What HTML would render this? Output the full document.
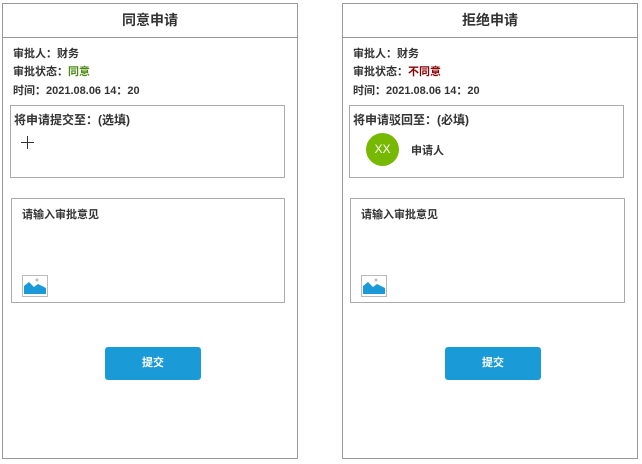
<!DOCTYPE html>
<html><head><meta charset="utf-8"><style>
*{margin:0;padding:0;box-sizing:border-box}
body{width:642px;height:464px;background:#fff;font-family:"Liberation Sans","Noto Sans CJK SC",sans-serif;color:#333;position:relative;overflow:hidden}
.p{position:absolute;top:3px;width:296px;height:456px;border:1px solid #999}
.h{height:34px;border-bottom:1px solid #999;text-align:center;line-height:32px;font-size:14px;font-weight:bold;color:#333}
.t{position:absolute;left:10px;font-size:11px;font-weight:bold;color:#333}
.b{position:absolute;border:1px solid #aaa}
.bt{position:absolute;left:102px;top:343px;width:96px;height:33px;background:#1a9bd7;border-radius:3px;color:#fff;font-size:11px;font-weight:bold;text-align:center;line-height:33px}
.ic{position:absolute;left:10px;top:76px;width:26px;height:22px;border:1px solid #bbb;background:#fff}
</style></head><body>
<div class="p" style="left:2px">
<div class="h">同意申请</div>
<div class="t" style="top:41px">审批人：财务</div>
<div class="t" style="top:59px">审批状态：<span style="color:#4e8a12">同意</span></div>
<div class="t" style="top:78px">时间：2021.08.06 14：20</div>
<div class="b" style="left:7px;top:101px;width:275px;height:73px">
<div style="position:absolute;left:3px;top:5px;font-size:12px;font-weight:bold">将申请提交至：(选填)</div>
<div style="position:absolute;left:10px;top:36px;width:13px;height:1px;background:#333"></div>
<div style="position:absolute;left:16px;top:30px;width:1px;height:13px;background:#333"></div>
</div>
<div class="b" style="left:8px;top:194px;width:274px;height:105px">
<div style="position:absolute;left:10px;top:7px;font-size:11px;font-weight:bold">请输入审批意见</div>
<div class="ic"><svg width="24" height="20" viewBox="0 0 24 20"><circle cx="14" cy="4" r="1.5" fill="#bbb"/><path d="M1 18 L1 10 L6 6 L11 11 L15 8 L23 12 L23 18 Z" fill="#1a9bd7"/></svg></div>
</div>
<div class="bt">提交</div>
</div>
<div class="p" style="left:342px">
<div class="h">拒绝申请</div>
<div class="t" style="top:41px">审批人：财务</div>
<div class="t" style="top:59px">审批状态：<span style="color:#8b0000">不同意</span></div>
<div class="t" style="top:78px">时间：2021.08.06 14：20</div>
<div class="b" style="left:6px;top:101px;width:275px;height:73px">
<div style="position:absolute;left:3px;top:5px;font-size:12px;font-weight:bold">将申请驳回至：(必填)</div>
<div style="position:absolute;left:16px;top:27px;width:33px;height:33px;border-radius:50%;background:#76b900;color:#fff;font-size:12px;text-align:center;line-height:33px">XX</div>
<div style="position:absolute;left:61px;top:36px;font-size:11px;font-weight:bold">申请人</div>
</div>
<div class="b" style="left:7px;top:194px;width:275px;height:105px">
<div style="position:absolute;left:10px;top:7px;font-size:11px;font-weight:bold">请输入审批意见</div>
<div class="ic"><svg width="24" height="20" viewBox="0 0 24 20"><circle cx="14" cy="4" r="1.5" fill="#bbb"/><path d="M1 18 L1 10 L6 6 L11 11 L15 8 L23 12 L23 18 Z" fill="#1a9bd7"/></svg></div>
</div>
<div class="bt">提交</div>
</div>
</body></html>
